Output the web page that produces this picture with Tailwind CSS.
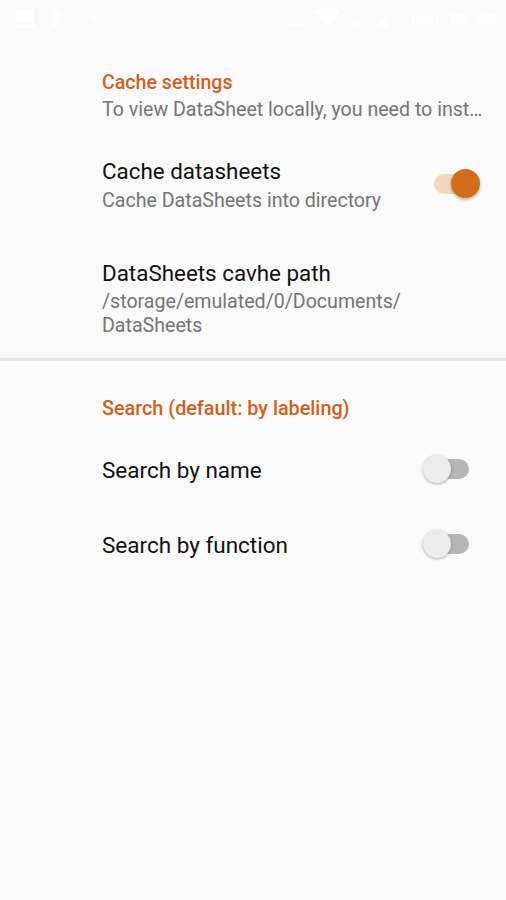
<!DOCTYPE html>
<html lang="en">
<head>
<meta charset="utf-8">
<title>Settings</title>
<script src="https://cdn.jsdelivr.net/npm/@tailwindcss/browser@4"></script>
</head>
<body class="bg-[#fafafa]">
<div class="flex h-[900px] w-[506px] flex-col overflow-hidden bg-[#fafafa] font-[Roboto,sans-serif]">
  <header class="h-[71px] shrink-0">
    <svg class="block" width="506" height="40" viewBox="0 0 506 40" fill="#fff">
      <path d="M16 9h19v14H16zM16 25h19v3H16z" opacity=".9"/>
      <path d="M51 9h6l6 7-5 5 4 3-8 4-4-5 2-5z" opacity=".6"/>
      <circle cx="94" cy="18" r="4" opacity=".5"/>
      <path d="M288 24h16v2h-16z" opacity=".6"/>
      <path d="M315 12q12-9 25 0L328 27z" opacity=".9"/>
      <circle cx="356" cy="23" r="4.500" opacity=".5"/>
      <path d="M376 27l12-14v14z" opacity=".8"/>
      <path d="M412 14h3v10h-3zM417 15h17v8h-17zM436 18h3v4h-3z" opacity=".6"/>
      <path d="M450 14h17v9h-17zM477 14h5v-3h3v3h11v9h-19z" opacity=".55"/>
    </svg>
  </header>
  <main>
    <section class="flex h-[287px] flex-col pl-[102px] pr-[20px]">
      <div class="h-[86px]">
        <h2 class="text-[19.6px]/[24px] font-medium text-[#d2601a]">Cache settings</h2>
        <p class="mt-[3px] whitespace-nowrap text-[19.6px]/[24px] text-[#757575]">To view DataSheet locally, you need to inst…</p>
      </div>
      <div class="flex h-[102px] justify-between">
        <div>
          <h3 class="text-[22.4px]/[28px] text-[#111]">Cache datasheets</h3>
          <p class="mt-[4px] text-[19.6px]/[24px] text-[#757575]">Cache DataSheets into directory</p>
        </div>
        <div class="mr-[6px] mt-[12px] flex h-[29px] w-[46px] items-center justify-end rounded-full">
          <div class="-mr-[15px] h-[20px] w-[32px] rounded-full bg-[#f2d6bf]"></div>
          <div class="relative size-[29px] rounded-full bg-[#d46b1a] shadow-[0_2px_3px_rgba(0,0,0,0.25)]"></div>
        </div>
      </div>
      <div>
        <h3 class="text-[22.4px]/[28px] text-[#111]">DataSheets cavhe path</h3>
        <p class="mt-[3px] text-[19.6px]/[24px] text-[#757575]">/storage/emulated/0/Documents/<br>DataSheets</p>
      </div>
    </section>
    <hr class="h-[3px] border-0 bg-[#e6e6e6]">
    <section class="pl-[102px] pr-[37px] pt-[36px]">
      <h2 class="h-[59px] text-[19.8px]/[24px] font-medium text-[#d2601a]">Search (default: by labeling)</h2>
      <div class="flex h-[75px] items-start justify-between">
        <h3 class="text-[22.5px]/[28px] text-[#111]">Search by name</h3>
        <div class="-mt-[1px] flex h-[28px] w-[46px] items-center">
          <div class="relative size-[28px] shrink-0 rounded-full bg-[#ececec] shadow-[0_1px_3px_rgba(0,0,0,0.3)]"></div>
          <div class="-ml-[14px] h-[20px] w-[32px] shrink-0 rounded-full bg-[#b5b5b5]"></div>
        </div>
      </div>
      <div class="flex items-start justify-between">
        <h3 class="text-[22.5px]/[28px] text-[#111]">Search by function</h3>
        <div class="-mt-[1px] flex h-[28px] w-[46px] items-center">
          <div class="relative size-[28px] shrink-0 rounded-full bg-[#ececec] shadow-[0_1px_3px_rgba(0,0,0,0.3)]"></div>
          <div class="-ml-[14px] h-[20px] w-[32px] shrink-0 rounded-full bg-[#b5b5b5]"></div>
        </div>
      </div>
    </section>
  </main>
</div>
</body>
</html>
